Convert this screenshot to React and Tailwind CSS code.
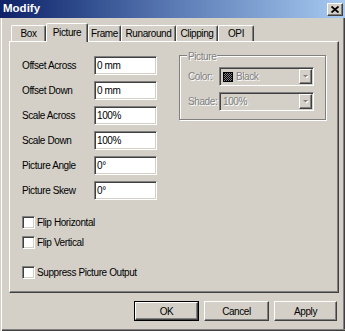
const sunken =
  'border border-t-[#808080] border-l-[#808080] border-b-white border-r-white shadow-[inset_1px_1px_0_#404040,inset_-1px_-1px_0_#d4d0c8]';
const raised =
  'border border-t-white border-l-white border-b-[#404040] border-r-[#404040] shadow-[inset_-1px_-1px_0_#808080]';
const disabledText = 'text-[#808080] [text-shadow:1px_1px_0_#fff]';

const fields = [
  ['Offset Across', '0 mm'],
  ['Offset Down', '0 mm'],
  ['Scale Across', '100%'],
  ['Scale Down', '100%'],
  ['Picture Angle', '0°'],
  ['Picture Skew', '0°'],
];

const tabs = [
  ['Box', 'w-[35px]'],
  ['Picture', 'w-[42px]'],
  ['Frame', 'w-[33px]'],
  ['Runaround', 'w-[55px]'],
  ['Clipping', 'w-[42px]'],
  ['OPI', 'w-[36px]'],
];

const Checkbox = ({ label, className = '' }) => (
  <div className={`flex items-center h-[13px] gap-[2px] ${className}`}>
    <div className={`w-[13px] h-[13px] bg-white ${sunken}`} />
    <span>{label}</span>
  </div>
);

const DisabledSelect = ({ swatch, value }) => (
  <div className={`w-[95px] h-[19px] bg-[#d4d0c8] flex items-center pl-[3px] pr-[1px] ${sunken}`}>
    {swatch && (
      <svg width="10" height="10" className="mr-[3px] shrink-0">
        <defs>
          <pattern id="dith" width="2" height="2" patternUnits="userSpaceOnUse">
            <rect width="2" height="2" fill="#808080" />
            <rect width="1" height="1" fill="#000" />
            <rect x="1" y="1" width="1" height="1" fill="#000" />
          </pattern>
        </defs>
        <rect x="0.5" y="0.5" width="9" height="9" fill="url(#dith)" stroke="#000" />
      </svg>
    )}
    <span className={disabledText}>{value}</span>
    <div className={`ml-auto w-[13px] h-[15px] bg-[#d4d0c8] flex items-center justify-center ${raised}`}>
      <svg width="8" height="5">
        <polygon points="1,1 6,1 3.5,3.5" fill="#fff" transform="translate(1,1)" />
        <polygon points="1,1 6,1 3.5,3.5" fill="#808080" />
      </svg>
    </div>
  </div>
);

const Button = ({ label, primary, className = '' }) => (
  <div className={`h-[20px] ${className} ${primary ? 'border border-black' : ''}`}>
    <div className={`h-full w-full flex items-center justify-center bg-[#d4d0c8] ${raised}`}>{label}</div>
  </div>
);

export default function App() {
  return (
    <div className="w-[345px] h-[331px] bg-[#d4d0c8] flex flex-col font-['Liberation_Sans',Arial,sans-serif] text-[10px] tracking-[-0.4px] text-black select-none">
      <div className="h-[18px] shrink-0 flex items-center justify-between pl-[3px] pr-[2px] bg-linear-to-r from-[#0f2168] via-[#5a7ab4] to-[#a6caf0]">
        <span className="text-white font-bold text-[11.5px] tracking-normal">Modify</span>
        <div className={`w-[16px] h-[13px] bg-[#d4d0c8] flex items-center justify-center ${raised}`}>
          <svg width="8" height="7">
            <path d="M0.5 0.5 L7.5 6.5 M7.5 0.5 L0.5 6.5" stroke="#000" strokeWidth="1.8" />
          </svg>
        </div>
      </div>

      <div className="flex-1 flex flex-col pl-[9px] shadow-[inset_1px_0_0_#d4d0c8,inset_2px_0_0_#fff,inset_0_-1px_0_#404040,inset_0_-2px_0_#808080,inset_-1px_0_0_#404040,inset_-2px_0_0_#808080]">
        <div className="mt-[5px] h-[18px] flex items-end pl-[2px]">
          {tabs.map(([name, w]) =>
            name === 'Picture' ? (
              <div
                key={name}
                className={`${w} h-[19px] -mb-px relative z-10 bg-[#d4d0c8] flex items-center justify-center pb-[2px] border-t border-l border-t-white border-l-white border-r border-r-[#404040] rounded-t-[2px] shadow-[inset_-1px_0_0_#808080]`}
              >
                {name}
              </div>
            ) : (
              <div
                key={name}
                className={`${w} h-[16px] flex items-center justify-center border-t border-l border-t-white border-l-white border-r border-r-[#404040] rounded-t-[2px] shadow-[inset_-1px_0_0_#808080]`}
              >
                {name}
              </div>
            )
          )}
        </div>

        <div className="w-[330px] h-[252px] flex border-t border-l border-t-white border-l-white border-r border-b border-r-[#404040] border-b-[#404040] shadow-[inset_-1px_-1px_0_#808080]">
          <div className="w-[169px] pl-[12px] pt-[14px] flex flex-col">
            <div className="flex flex-col gap-[6px]">
              {fields.map(([label, value]) => (
                <div key={label} className="flex items-center h-[19px]">
                  <span className="w-[72px]">{label}</span>
                  <div className={`w-[63px] h-[19px] bg-white pl-[2px] flex items-center ${sunken}`}>{value}</div>
                </div>
              ))}
            </div>
            <Checkbox label="Flip Horizontal" className="mt-[16px]" />
            <Checkbox label="Flip Vertical" className="mt-[7px]" />
            <Checkbox label="Suppress Picture Output" className="mt-[17px]" />
          </div>

          <div className="pt-[13px]">
            <div className="relative w-[147px] h-[65px] border border-[#808080] shadow-[inset_1px_1px_0_#fff,1px_1px_0_#fff] pl-[8px] pt-[11px] flex flex-col gap-[6px]">
              <span className={`absolute -top-[7px] left-[7px] px-[1px] bg-[#d4d0c8] ${disabledText}`}>Picture</span>
              <div className="flex items-center">
                <span className={`w-[31px] ${disabledText}`}>Color:</span>
                <DisabledSelect swatch value="Black" />
              </div>
              <div className="flex items-center">
                <span className={`w-[31px] ${disabledText}`}>Shade:</span>
                <DisabledSelect value="100%" />
              </div>
            </div>
          </div>
        </div>

        <div className="mt-[8px] flex justify-end gap-[5px] pr-[8px]">
          <Button label="OK" primary className="w-[65px]" />
          <Button label="Cancel" className="w-[65px]" />
          <Button label="Apply" className="w-[63px]" />
        </div>
      </div>
    </div>
  );
}
